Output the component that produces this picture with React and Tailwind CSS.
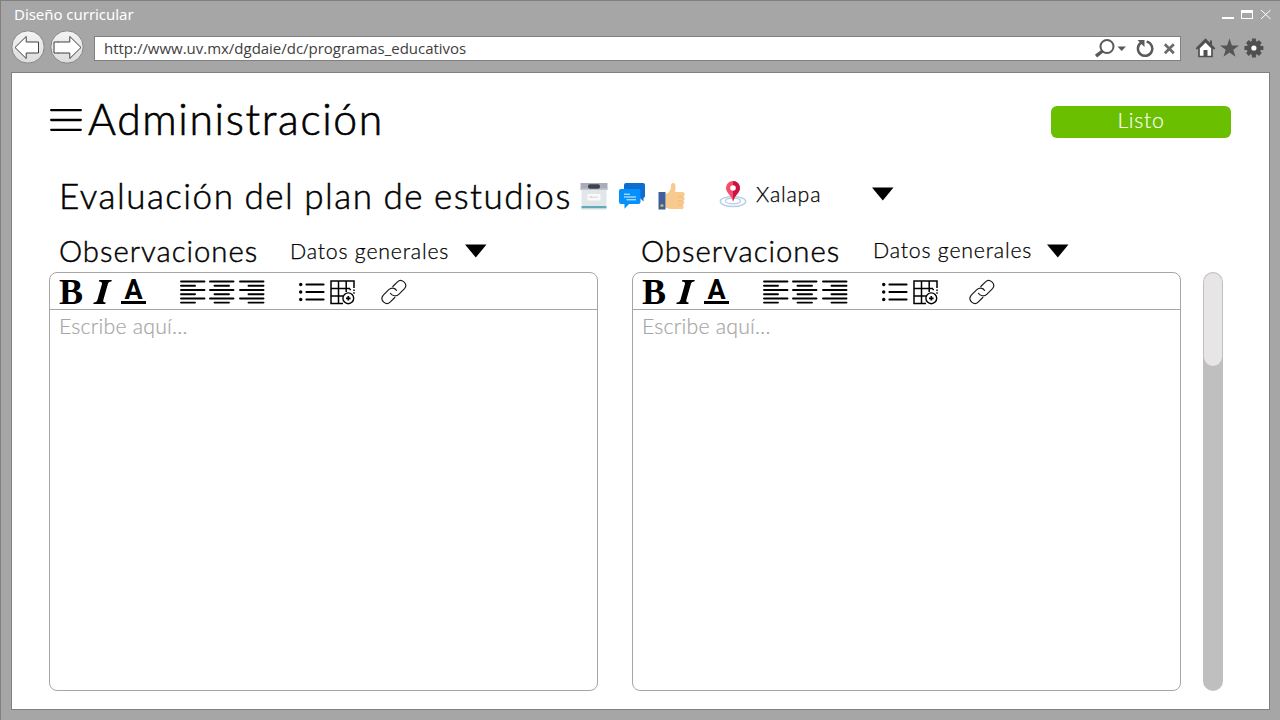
import React from "react";

const Caret = ({ className = "" }) => (
  <svg className={"shrink-0 " + className} width="22" height="14" viewBox="0 0 22 14">
    <path d="M0 .5H21.5L10.8 13.5Z" fill="#000" />
  </svg>
);

const NavButton = ({ flip = false }) => (
  <svg width="34" height="34" viewBox="0 0 34 34" className="shrink-0">
    <defs>
      <linearGradient id="navFill" x1="0" y1="0" x2="0" y2="1">
        <stop offset="0" stopColor="#f4f4f4" />
        <stop offset="1" stopColor="#dcdcdc" />
      </linearGradient>
    </defs>
    <circle cx="17" cy="17" r="16.2" fill="url(#navFill)" stroke="#858585" strokeWidth="1" />
    <path
      d="M4 17.5L15.2 6.500V12H27.500V23H15.200V28.500Z"
      transform={flip ? "translate(35 0) scale(-1 1)" : undefined}
      fill="#fff"
      stroke="#404040"
      strokeWidth="1"
    />
    {flip && <path d="M4.500 12H8V23H4.500Z" fill="#fff" />}
    {flip && <path d="M8.500 12H4V23H8.500" fill="none" stroke="#404040" strokeWidth="1" />}
  </svg>
);

const WindowControls = () => (
  <svg width="50" height="14" viewBox="0 0 50 14" className="shrink-0">
    <path d="M0 10h12v2H0z" fill="#fff" />
    <path d="M19 3h12v9H19zM20 6v5h10V6z" fill="#fff" fillRule="evenodd" />
    <path d="M39 3l9.5 9M48.5 3L39 12" stroke="#fff" strokeWidth="1" />
  </svg>
);

const AddressIcons = () => (
  <svg width="84" height="22" viewBox="0 0 84 22" className="shrink-0">
    <g fill="none" stroke="#595959">
      <circle cx="13" cy="8.500" r="6.500" strokeWidth="2" />
      <path d="M8.500 13L2 18.200" strokeWidth="3.400" />
      <path d="M47.200 4.600A7.200 7.200 0 1 0 52.600 3.600" strokeWidth="2.500" />
      <path d="M70.800 6.300L79.800 15.300M79.800 6.300L70.800 15.300" stroke="#6b6b6b" strokeWidth="2.700" />
    </g>
    <path d="M43.500 2h7v7z" fill="#595959" />
    <path d="M23.500 8.500h8.400l-4.200 4.600z" fill="#595959" />
  </svg>
);

const BrowserIcons = () => (
  <svg width="70" height="22" viewBox="0 0 70 22" className="shrink-0">
    <path d="M4 11v8.500h13V11L10.500 4.500z" fill="#fff" stroke="#505050" strokeWidth="1.700" />
    <path d="M1.300 12L10.500 2.600L19.700 12" fill="none" stroke="#505050" strokeWidth="1.800" />
    <path d="M15 3.500h2v4h-2zM8.500 13h4v6.500h-4z" fill="#505050" />
    <path d="M34.500 1.500l2.400 6.900h7.100l-5.700 4.300 2.200 7-6-4.200-6 4.200 2.200-7-5.700-4.300h7.100z" fill="#555" />
    <g transform="translate(58.900 11)">
      <g stroke="#505050" strokeWidth="4">
        <path d="M0-9.500V9.500M-9.500 0H9.500M-6.500-6.500L6.500 6.500M6.500-6.500L-6.500 6.500" />
      </g>
      <circle r="7.200" fill="#505050" />
      <circle r="2.600" fill="#fff" />
    </g>
  </svg>
);

const BoxIcon = () => (
  <svg width="28" height="28" viewBox="0 0 28 28" className="shrink-0">
    <path d="M1.500 7h25v17.500h-25z" fill="#e1e6e9" />
    <path d="M1.500 24h25v2.500h-25z" fill="#63a9b8" />
    <path d="M1.500 26.300h25v1.200h-25z" fill="#d3dce0" />
    <path d="M.5 1h27v7h-27z" fill="#a9adb9" />
    <path d="M.5 6.500h27V8h-27z" fill="#c3c7cf" />
    <rect x="8" y="2.300" width="12" height="4.400" rx="2" fill="#3e4350" />
    <rect x="7.500" y="12" width="13" height="6.500" fill="#fafafa" />
    <path d="M9.500 16c1-2.500 1.800-2.500 1.500-.5 1.500-1.500 1.500.5 3 0s2-1 4 0" fill="none" stroke="#b9c0c6" strokeWidth=".7" />
  </svg>
);

const ChatIcon = () => (
  <svg width="28" height="28" viewBox="0 0 28 28" className="shrink-0">
    <path d="M8 1h17a2 2 0 0 1 2 2v11a2 2 0 0 1-1.500 2v3.500L22 16H8a2 2 0 0 1-2-2V3a2 2 0 0 1 2-2z" fill="#0f6cd0" />
    <path d="M3 7h17.500a2 2 0 0 1 2 2v11a2 2 0 0 1-2 2H11l-4.500 4.700V22H3a2 2 0 0 1-2-2V9a2 2 0 0 1 2-2z" fill="#0590fb" />
    <path d="M6 12.200h6M6 15h12M8.500 17.800H18" stroke="#e8f5ff" strokeWidth="1" />
  </svg>
);

const ThumbIcon = () => (
  <svg width="28" height="28" viewBox="0 0 28 28" className="ml-[2px] shrink-0">
    <path d="M7.500 12c3-.5 5-3.500 5.500-7 0-3 .4-4 2-4 2.200 0 2.800 2 2.600 4.500L17 10h7.500a2.400 2.400 0 0 1 1 4.500 2.400 2.400 0 0 1-.2 4.300 2.300 2.300 0 0 1-.9 4.100 2.200 2.200 0 0 1-1.900 4.100H12.500c-2 0-3-1-5-1.200z" fill="#f8ca90" />
    <path d="M20 14.700h5M20 18.900h5M19.500 23h5" stroke="#edb571" strokeWidth=".7" />
    <path d="M.500 10h7v17.500h-7z" fill="#3f5f9b" />
    <circle cx="4" cy="23.500" r="1.600" fill="#d5ad50" />
  </svg>
);

const PinIcon = () => (
  <svg width="28" height="28" viewBox="0 0 28 28" className="shrink-0">
    <g fill="none" stroke="#b5cde6">
      <ellipse cx="14" cy="21.500" rx="12.700" ry="5" strokeWidth="1.400" />
      <ellipse cx="14" cy="21" rx="7.500" ry="2.800" strokeWidth="1.300" />
    </g>
    <path d="M14 21.500C12.500 15.500 7 12.500 7 8a7 7 0 0 1 14 0c0 4.500-5.500 7.500-7 13.500z" fill="#f84c6b" />
    <path d="M14 1a7 7 0 0 1 7 7c0 4.500-5.500 7.500-7 13.500z" fill="#c91345" />
    <circle cx="14" cy="8" r="2.800" fill="#fff" />
  </svg>
);

const BoldIcon = () => (
  <span className="flex h-[26px] w-[24px] items-center justify-center font-['Liberation_Serif',serif] text-[36px] leading-none font-bold">
    B
  </span>
);

const ItalicIcon = () => (
  <svg width="20" height="26" viewBox="0 0 20 26" className="ml-[10px] shrink-0">
    <path
      d="M6.300 1H18.800L18.400 2.600C16.100 2.800 15.400 3.300 14.800 5.300L10.400 20.800C9.900 22.800 10.300 23.300 12.700 23.500L12.300 25H.300L.700 23.500C3.100 23.300 3.800 22.800 4.500 20.800L8.900 5.300C9.400 3.300 8.400 2.800 5.900 2.600Z"
      fill="#000"
    />
  </svg>
);

const ColorIcon = () => (
  <span className="ml-[8px] flex h-[24px] w-[25px] flex-col items-center border-b-[3px] border-black font-['Roboto',sans-serif] text-[27px] leading-[21px] font-bold">
    A
  </span>
);

const ALIGN = {
  left: "M1 1.500h23.500M1 10h23.500M1 18.500h23.500M1 5.800h14M1 14.200h14M1 22.600h14",
  center: "M1 1.500h23.500M1 10h23.500M1 18.500h23.500M5.500 5.800h14.500M5.500 14.200h14.500M5.500 22.600h14.500",
  right: "M1 1.500h23.500M1 10h23.500M1 18.500h23.500M9.500 5.800h15M9.500 14.200h15M9.500 22.600h15",
};

const AlignIcon = ({ kind, className = "" }) => (
  <svg width="26" height="24" viewBox="0 0 26 24" className={"shrink-0 " + className}>
    <path d={ALIGN[kind]} stroke="#000" strokeWidth="1.900" strokeLinecap="round" />
  </svg>
);

const ListIcon = () => (
  <svg width="26" height="24" viewBox="0 0 26 24" className="ml-[34px] shrink-0">
    <path d="M7.500 4.500H24.500M7.500 12H24.500M7.500 19.500H24.500" stroke="#000" strokeWidth="2.200" strokeLinecap="round" />
    <circle cx="1.700" cy="4.500" r="1.700" />
    <circle cx="1.700" cy="12" r="1.700" />
    <circle cx="1.700" cy="19.500" r="1.700" />
  </svg>
);

const TableIcon = () => (
  <svg width="25" height="25" viewBox="0 0 25 25" className="ml-[5px] shrink-0">
    <g fill="none" stroke="#000" strokeWidth="1.500">
      <path d="M13 23.500H1V1h23v7M1 8.500h19M1 16h12M8.500 1v22.500M16.200 1v11" />
      <path d="M24 9.500v5M19.500 9.500h2" strokeDasharray="1.500 1.300" />
      <circle cx="18.300" cy="18.300" r="5.400" fill="#fff" strokeWidth="1.400" />
      <path d="M18.300 16v4.600M16 18.300h4.600" strokeWidth="1.700" />
    </g>
  </svg>
);

const LinkIcon = ({ className = "" }) => (
  <svg width="26" height="26" viewBox="0 0 26 26" className={"shrink-0 " + className}>
    <g fill="none" stroke="#1a1a1a" strokeWidth="1.150" strokeLinecap="round">
      <path d="M11.800 7.500l4.700-4.700c3.800-3.800 11 1.800 7 6.800L17.800 15.300c-2.500 2.400-6.800 1.800-8.400-1" />
      <path d="M13.800 18.500l-4.700 4.700c-3.800 3.800-10.800-1.800-7-6.800l5.700-5.700c2.500-2.400 6.200-2 7.800.8" />
    </g>
  </svg>
);

const Editor = ({ headingClass = "", titleClass = "", caretClass = "", linkClass = "" }) => (
  <section className="flex w-[549px] shrink-0 flex-col">
    <div className={"flex h-[38px] items-center pb-[3px] " + titleClass}>
      <h3 className="w-[231px] pb-px text-[29.3px] leading-none font-light tracking-[1px] whitespace-nowrap [-webkit-text-stroke:0.45px_#000]">
        Observaciones
      </h3>
      <div className={"flex items-center " + headingClass}>
        <span className="w-[175px] text-[21.3px] leading-none font-light tracking-[0.8px] whitespace-nowrap [-webkit-text-stroke:0.25px_#000]">
          Datos generales
        </span>
        <Caret className={caretClass} />
      </div>
    </div>
    <div className="flex h-[419px] flex-col rounded-lg border border-[#a6a6a6]">
      <div className="flex h-[37px] shrink-0 items-center border-b border-[#a6a6a6] pt-[2px] pl-[9px]">
        <BoldIcon />
        <ItalicIcon />
        <ColorIcon />
        <AlignIcon kind="left" className="ml-[34px]" />
        <AlignIcon kind="center" className="ml-[3px]" />
        <AlignIcon kind="right" className="ml-[4px]" />
        <ListIcon />
        <TableIcon />
        <LinkIcon className={linkClass} />
      </div>
      <p className="pt-[3px] pl-[9px] text-[21.3px] leading-[26px] font-light tracking-[0.2px] text-[#a6a6a6] [-webkit-text-stroke:0.2px_#a6a6a6]">
        Escribe aquí…
      </p>
    </div>
  </section>
);

export default function App() {
  return (
    <div className="flex h-[720px] w-[1280px] flex-col overflow-hidden border-t border-l border-[#808080] bg-[#a6a6a6] font-['Lato',sans-serif] text-black">
      <div className="flex h-[28px] items-center justify-between pr-[8px] pb-[2px] pl-[13px]">
        <span className="font-['Noto_Sans',sans-serif] text-[15px] leading-none tracking-[-0.05px] text-white">Diseño curricular</span>
        <WindowControls />
      </div>
      <div className="flex h-[43px] items-start pt-[1px] pl-[10px]">
        <NavButton />
        <div className="ml-[5px]">
          <NavButton flip />
        </div>
        <div className="mt-[6px] ml-[10px] flex h-[25px] w-[1087px] items-center justify-between border border-[#808080] bg-white pr-[2px] pl-[9px]">
          <span className="font-['Open_Sans',sans-serif] text-[15px] leading-none tracking-[-0.02px] text-[#404040]">
            http://www.uv.mx/dgdaie/dc/programas_educativos
          </span>
          <AddressIcons />
        </div>
        <div className="mt-[7px] ml-[14px]">
          <BrowserIcons />
        </div>
      </div>
      <main className="ml-[10px] flex h-[638px] w-[1259px] flex-col border border-[#808080] bg-white">
        <header className="mt-[25px] flex h-[44px] items-center pl-[38px]">
          <svg width="32" height="24" viewBox="0 0 32 24" className="shrink-0">
            <path d="M1.200 2.200h29.600M1.200 12h29.600M1.200 21.800h29.600" stroke="#000" strokeWidth="2.300" strokeLinecap="round" />
          </svg>
          <h1 className="ml-[6px] w-[963px] pb-[2px] text-[42.7px] leading-none font-light tracking-[1.65px] whitespace-nowrap [-webkit-text-stroke:0.65px_#000]">
            Administración
          </h1>
          <button className="mt-[4px] flex h-[32px] w-[180px] items-center justify-center rounded-md bg-[#6abf00] pb-[2px] text-[21.3px] leading-none font-light tracking-[0.7px] text-white [-webkit-text-stroke:0.15px_#fff]">
            Listo
          </button>
        </header>
        <div className="mt-[34px] flex h-[40px] items-center pl-[47px]">
          <h2 className="w-[521px] pb-[2px] text-[35px] leading-none font-light tracking-[1.5px] whitespace-nowrap [word-spacing:-1px] [-webkit-text-stroke:0.5px_#000]">
            Evaluación del plan de estudios
          </h2>
          <div className="flex gap-[10px] pb-px">
            <BoxIcon />
            <ChatIcon />
            <ThumbIcon />
          </div>
          <div className="ml-[33px] flex items-center pb-[4px]">
            <PinIcon />
            <span className="ml-[9px] w-[116px] pt-px text-[21.3px] leading-none font-light tracking-[0.8px] [-webkit-text-stroke:0.25px_#000]">
              Xalapa
            </span>
            <Caret />
          </div>
        </div>
        <div className="mt-[18px] flex pl-[37px]">
          <Editor titleClass="pl-[10px]" linkClass="ml-[26px]" />
          <div className="ml-[34px]">
            <Editor titleClass="pl-[9px]" headingClass="pb-[1px] pl-px" caretClass="-ml-px" linkClass="ml-[31px]" />
          </div>
          <div className="mt-[38px] ml-[22px] h-[419px] w-[20px] rounded-full bg-[#bfbfbf] p-px">
            <div className="h-[93px] rounded-full bg-[#e7e5e6]" />
          </div>
        </div>
      </main>
    </div>
  );
}
